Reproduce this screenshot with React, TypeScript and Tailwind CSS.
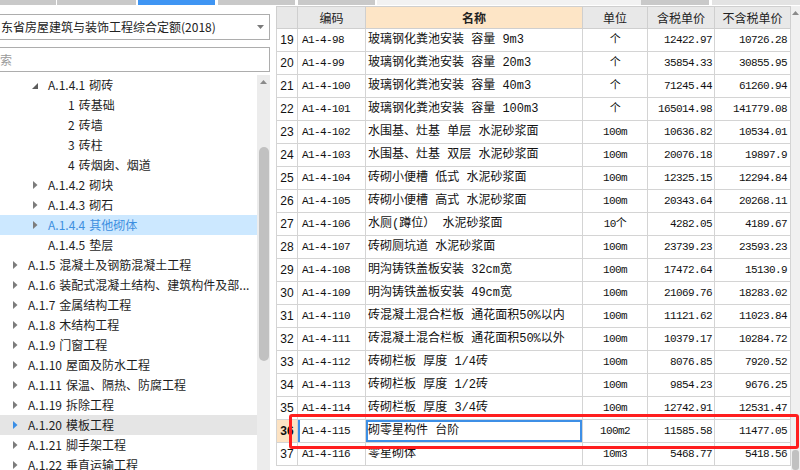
import React from "react";

type TreeItem = { lvl: 1 | 2 | 3; icon?: "open" | "closed"; text: string; state?: "sel" | "hover" };

const tree: TreeItem[] = [
  { lvl: 2, icon: "open", text: "A.1.4.1 砌砖" },
  { lvl: 3, text: "1 砖基础" },
  { lvl: 3, text: "2 砖墙" },
  { lvl: 3, text: "3 砖柱" },
  { lvl: 3, text: "4 砖烟囱、烟道" },
  { lvl: 2, icon: "closed", text: "A.1.4.2 砌块" },
  { lvl: 2, icon: "closed", text: "A.1.4.3 砌石" },
  { lvl: 2, icon: "closed", text: "A.1.4.4 其他砌体", state: "sel" },
  { lvl: 2, text: "A.1.4.5 垫层" },
  { lvl: 1, icon: "closed", text: "A.1.5 混凝土及钢筋混凝土工程" },
  { lvl: 1, icon: "closed", text: "A.1.6 装配式混凝土结构、建筑构件及部..." },
  { lvl: 1, icon: "closed", text: "A.1.7 金属结构工程" },
  { lvl: 1, icon: "closed", text: "A.1.8 木结构工程" },
  { lvl: 1, icon: "closed", text: "A.1.9 门窗工程" },
  { lvl: 1, icon: "closed", text: "A.1.10 屋面及防水工程" },
  { lvl: 1, icon: "closed", text: "A.1.11 保温、隔热、防腐工程" },
  { lvl: 1, icon: "closed", text: "A.1.19 拆除工程" },
  { lvl: 1, icon: "closed", text: "A.1.20 模板工程", state: "hover" },
  { lvl: 1, icon: "closed", text: "A.1.21 脚手架工程" },
  { lvl: 1, icon: "closed", text: "A.1.22 垂直运输工程" },
];

// no, code, name, unit, price with tax, price without tax
const rows: [number, string, string, string, string, string][] = [
  [19, "A1-4-98", "玻璃钢化粪池安装 容量 9m3", "个", "12422.97", "10726.28"],
  [20, "A1-4-99", "玻璃钢化粪池安装 容量 20m3", "个", "35854.33", "30855.95"],
  [21, "A1-4-100", "玻璃钢化粪池安装 容量 40m3", "个", "71245.44", "61260.94"],
  [22, "A1-4-101", "玻璃钢化粪池安装 容量 100m3", "个", "165014.98", "141779.08"],
  [23, "A1-4-102", "水围基、灶基 单层 水泥砂浆面", "100m", "10636.82", "10534.01"],
  [24, "A1-4-103", "水围基、灶基 双层 水泥砂浆面", "100m", "20076.18", "19897.9"],
  [25, "A1-4-104", "砖砌小便槽 低式 水泥砂浆面", "100m", "12325.15", "12294.84"],
  [26, "A1-4-105", "砖砌小便槽 高式 水泥砂浆面", "100m", "20343.64", "20268.11"],
  [27, "A1-4-106", "水厕(蹲位） 水泥砂浆面", "10个", "4282.05", "4189.67"],
  [28, "A1-4-107", "砖砌厕坑道 水泥砂浆面", "100m", "23739.23", "23593.23"],
  [29, "A1-4-108", "明沟铸铁盖板安装 32cm宽", "100m", "17472.64", "15130.9"],
  [30, "A1-4-109", "明沟铸铁盖板安装 49cm宽", "100m", "21069.76", "18283.02"],
  [31, "A1-4-110", "砖混凝土混合栏板 通花面积50%以内", "100m", "11121.62", "11023.84"],
  [32, "A1-4-111", "砖混凝土混合栏板 通花面积50%以外", "100m", "10379.17", "10284.72"],
  [33, "A1-4-112", "砖砌栏板 厚度 1/4砖", "100m", "8076.85", "7920.52"],
  [34, "A1-4-113", "砖砌栏板 厚度 1/2砖", "100m", "9854.23", "9676.25"],
  [35, "A1-4-114", "砖砌栏板 厚度 3/4砖", "100m", "12742.91", "12531.47"],
  [36, "A1-4-115", "砌零星构件 台阶", "100m2", "11585.58", "11477.05"],
  [37, "A1-4-116", "零星砌体", "10m3", "5468.77", "5418.56"],
];

function TreeIcon({ kind, blue }: { kind?: "open" | "closed"; blue?: boolean }) {
  if (kind === "open")
    return (
      <svg width="6" height="6" viewBox="0 0 6 6" className="mt-[1px]">
        <path d="M6 0 L6 6 L0 6 Z" fill="#5c5c5c" />
      </svg>
    );
  if (kind === "closed")
    return (
      <svg width="5" height="8" viewBox="0 0 5 8" className="ml-[1px]">
        <path d="M0 0 L4.5 4 L0 8 Z" fill={blue ? "#3a8ee6" : "#7c7c7c"} />
      </svg>
    );
  return null;
}

export default function App() {
  return (
    <div className="w-[800px] h-[470px] overflow-hidden bg-white flex flex-col relative font-['Noto_Sans_CJK_SC',sans-serif] text-[#1e1e1e]">
      {/* top tab strip */}
      <div className="h-[6px] flex items-start shrink-0">
        <div className="h-[5px] w-[56px] bg-[#c9c9c9]" />
        <div className="h-[5px] w-[79px] ml-[1px] bg-[#c9c9c9]" />
        <div className="h-[5px] w-[77px] ml-[2px] bg-[#3f95f3]" />
        <div className="h-[5px] w-[77px] ml-[3px] bg-[#c9c9c9]" />
        <div className="h-[5px] w-[77px] ml-[3px] bg-[#c9c9c9]" />
        <div className="h-[5px] w-[264px] ml-[2px] bg-[#f2f2f2]" />
        <div className="h-[5px] w-[68px] bg-[#c9c9c9]" />
        <div className="h-[5px] flex-1 ml-[3px] bg-[#e3e3e3]" />
      </div>

      <div className="flex flex-1 min-h-0">
        {/* left panel */}
        <div className="w-[276px] shrink-0 flex flex-col">
          <div className="mt-[8px] w-[270px] h-[26px] border border-l-0 border-[#adadad] flex items-center justify-between text-[12px] text-[#222]">
            <span className="pl-[1px]">东省房屋建筑与装饰工程综合定额(2018)</span>
            <svg width="7" height="4" viewBox="0 0 7 4" className="mr-[5px]">
              <path d="M0 0 L7 0 L3.5 4 Z" fill="#7a7a7a" />
            </svg>
          </div>
          <div className="mt-[7px] w-[270px] h-[25px] border border-l-0 border-[#adadad] flex items-center text-[12px] text-[#9a9a9a]">
            <span>索</span>
          </div>
          <div className="mt-[3px] flex flex-1 min-h-0">
            <div className="w-[257px] shrink-0 text-[12px]">
              {tree.map((t, i) => {
                const pad = t.lvl === 1 ? "pl-[12px]" : t.lvl === 2 ? "pl-[32px]" : "pl-[68px]";
                const bg = t.state === "sel" ? "bg-[#cce8ff]" : t.state === "hover" ? "bg-[#e5e5e5]" : "";
                const color = t.state === "sel" ? "text-[#3d8fe0]" : "text-[#1e1e1e]";
                const cut = t.text.indexOf(" ");
                return (
                  <div key={i} className={`h-[20px] flex items-center ${pad} ${bg} ${color}`}>
                    {t.lvl !== 3 && (
                      <span className="w-[16px] flex items-center">
                        <TreeIcon kind={t.icon} blue={t.state === "hover"} />
                      </span>
                    )}
                    <span className="whitespace-nowrap">{t.text.slice(0, cut)}</span>
                    <span className="whitespace-nowrap ml-[4px]">{t.text.slice(cut + 1)}</span>
                  </div>
                );
              })}
            </div>
            <div className="w-[13px] shrink-0 bg-[#ececec] flex flex-col items-center">
              <div className="h-[14px] flex items-center justify-center">
                <svg width="7" height="4" viewBox="0 0 7 4">
                  <path d="M0 4 L3.5 0 L7 4 Z" fill="#8a8a8a" />
                </svg>
              </div>
              <div className="mt-[58px] w-[10px] h-[214px] rounded-[5px] bg-[#c1c1c1]" />
            </div>
          </div>
        </div>

        {/* table */}
        <div className="flex-1 flex min-w-0">
          <div className="w-[515px] shrink-0 flex flex-col">
            <div className="h-[23px] flex border-t border-b border-[#cfcfcf] bg-[#e8e8e8] text-[12px] text-[#222]">
              <div className="w-[22px] border-l border-r border-[#cfcfcf]" />
              <div className="w-[68px] border-r border-[#cfcfcf] flex items-center justify-center">编码</div>
              <div className="w-[217px] border-r border-[#cfcfcf] bg-[#fde5c6] flex items-center justify-center font-bold">名称</div>
              <div className="w-[65px] border-r border-[#cfcfcf] flex items-center justify-center">单位</div>
              <div className="w-[67px] border-r border-[#cfcfcf] flex items-center justify-center">含税单价</div>
              <div className="w-[76px] border-r border-[#cfcfcf] flex items-center justify-center">不含税单价</div>
            </div>
            {rows.map((r) => {
              const sel = r[0] === 36;
              return (
                <div key={r[0]} className="h-[23px] shrink-0 flex border-b border-[#d4d4d4] text-[#111]">
                  <div
                    className={`w-[22px] border-l border-r border-[#d4d4d4] flex items-center justify-center text-[12px] font-['Liberation_Sans',sans-serif] ${
                      sel ? "bg-[#fde3c3] font-bold" : ""
                    }`}
                  >
                    {r[0]}
                  </div>
                  <div
                    className={`w-[68px] border-r border-[#d4d4d4] flex items-center pl-[4px] text-[11px] tracking-[-0.6px] font-['Liberation_Mono','Noto_Sans_CJK_SC',monospace] ${
                      sel ? "shadow-[inset_2px_0_0_#3d8fe6]" : ""
                    }`}
                  >
                    {r[1]}
                  </div>
                  <div
                    className={`w-[217px] border-r border-[#d4d4d4] flex items-center pl-[2px] text-[12px] whitespace-nowrap overflow-hidden font-['Liberation_Mono','Noto_Sans_CJK_SC',monospace] ${
                      sel ? "shadow-[inset_0_0_0_2px_#3d8fe6]" : ""
                    }`}
                  >
                    {r[2]}
                  </div>
                  <div className="w-[65px] border-r border-[#d4d4d4] flex items-center justify-center text-[11px] tracking-[-0.6px] font-['Liberation_Mono','Noto_Sans_CJK_SC',monospace]">
                    {r[3]}
                  </div>
                  <div className="w-[67px] border-r border-[#d4d4d4] flex items-center justify-end pr-[2px] text-[11px] tracking-[-0.6px] font-['Liberation_Mono',monospace]">
                    {r[4]}
                  </div>
                  <div className="w-[76px] border-r border-[#d4d4d4] flex items-center justify-end pr-[3px] text-[11px] tracking-[-0.6px] font-['Liberation_Mono',monospace]">
                    {r[5]}
                  </div>
                </div>
              );
            })}
          </div>
          <div className="flex-1 bg-[#f0f0f0] flex flex-col items-center">
            <div className="h-[14px] flex items-center justify-center">
              <svg width="7" height="4" viewBox="0 0 7 4">
                <path d="M0 4 L3.5 0 L7 4 Z" fill="#8a8a8a" />
              </svg>
            </div>
            <div className="flex-1" />
            <div className="w-[7px] h-[20px] rounded-[3px] bg-[#c1c1c1]" />
          </div>
        </div>
      </div>

      {/* red highlight annotation */}
      <div className="absolute left-[289px] top-[414px] w-[510px] h-[35px] border-[3px] border-[#ff1e1e] rounded-[3px]" />
    </div>
  );
}
